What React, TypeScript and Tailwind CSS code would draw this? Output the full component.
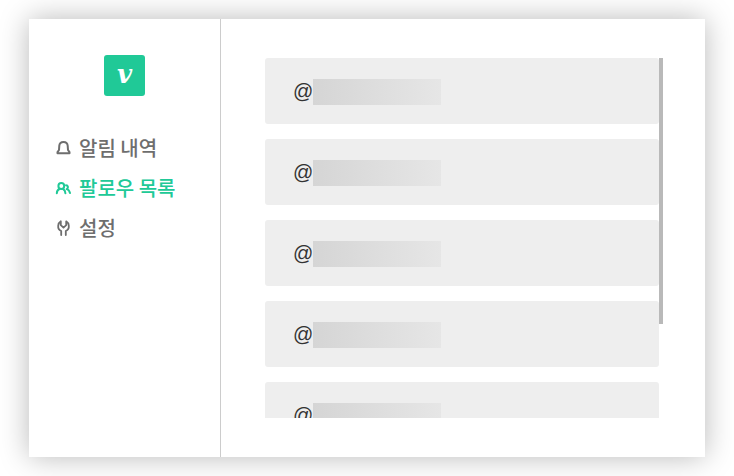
import type { ReactNode } from "react";

const iconProps = {
  width: 16,
  height: 16,
  viewBox: "0 0 16 16",
  fill: "none",
  stroke: "currentColor",
  strokeWidth: 2,
  strokeLinejoin: "round" as const,
  strokeLinecap: "round" as const,
  "aria-hidden": true,
};

function BellIcon() {
  return (
    <svg {...iconProps}>
      <path d="M2.500 13.200h12v-1.100L13 10 12.700 5.700C12.500 3.100 11 1.900 8.500 1.900S4.500 3.100 4.300 5.700L4 10l-1.500 2.100z" />
    </svg>
  );
}

function PeopleIcon() {
  return (
    <svg {...iconProps}>
      <ellipse cx="6.300" cy="6" rx="2.900" ry="3.100" />
      <path d="M1.800 13.200c.1-2 .9-3.400 2.600-4.200M10.400 13.200c-.1-2-.8-3.400-2.300-4.200" />
      <path d="M11 5.200c2.200 0 2.500 2.800.8 3.900 1.800.5 2.700 1.900 3.200 3.900" />
    </svg>
  );
}

function WrenchIcon() {
  return (
    <svg {...iconProps} strokeWidth={1.800}>
      <path d="M6.200 15V11C4 10 3 8 3.200 5.800 3.300 3.800 4.200 2.300 5.800 1.300v3.900l2.700 2.400 2.700-2.400V1.300c1.600 1 2.500 2.500 2.600 4.500.2 2.200-.8 4.200-3 5.200v4" />
    </svg>
  );
}

const menu: { label: string; icon: ReactNode; active?: boolean }[] = [
  { label: "알림 내역", icon: <BellIcon /> },
  { label: "팔로우 목록", icon: <PeopleIcon />, active: true },
  { label: "설정", icon: <WrenchIcon /> },
];

const follows = [1, 2, 3, 4, 5];

export default function App() {
  return (
    <div className="flex h-screen bg-white px-[29px] py-[19px] font-['Liberation_Sans','Noto_Sans_CJK_KR',sans-serif]">
      <div className="flex min-w-0 flex-1 bg-white shadow-[0_0_28px_rgba(0,0,0,0.28)]">
        <aside className="flex w-48 shrink-0 flex-col border-r border-[#cccccc] pt-9">
          <div className="flex size-[41px] items-center justify-center self-center rounded-[3px] bg-[#20c997] pb-1 font-['DejaVu_Serif',serif] text-[26px] leading-none font-bold text-white italic">
            v
          </div>
          <nav className="mt-8 flex flex-col pl-[26px]">
            {menu.map((item) => (
              <a
                key={item.label}
                href="#"
                aria-current={item.active ? "page" : undefined}
                className={`flex h-10 items-center gap-2 font-['Noto_Sans_CJK_KR',sans-serif] text-xl font-medium ${
                  item.active ? "text-[#20c997]" : "text-[#6e6e6e]"
                }`}
              >
                {item.icon}
                {item.label}
              </a>
            ))}
          </nav>
        </aside>
        <main className="flex min-w-0 flex-1 py-[39px] pr-[42px] pl-11">
          <ul className="flex min-w-0 flex-1 flex-col gap-[15px] overflow-hidden">
            {follows.map((id) => (
              <li
                key={id}
                className="flex h-[66px] shrink-0 items-center rounded-[3px] bg-[#eeeeee] px-7 text-xl text-[#333333]"
              >
                @
                <span className="mt-px h-[26px] w-32 bg-linear-to-r from-[#d5d5d5] to-[#e6e6e6]" />
              </li>
            ))}
          </ul>
          <div className="w-1 shrink-0">
            <div className="h-[74%] bg-[#b9b9b9]" />
          </div>
        </main>
      </div>
    </div>
  );
}
